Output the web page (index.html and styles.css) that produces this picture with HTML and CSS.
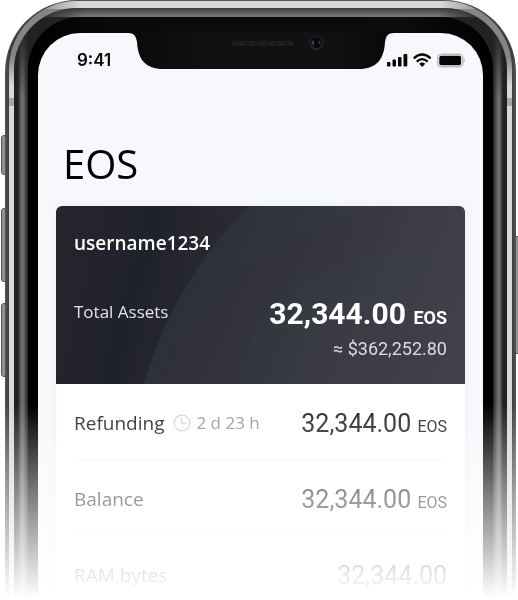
FILE: index.html
```html
<!DOCTYPE html>
<html lang="en">
<head>
<meta charset="utf-8">
<meta name="viewport" content="width=device-width, initial-scale=1">
<title>EOS wallet</title>
<link rel="stylesheet" href="styles.css">
</head>
<body>
<div class="phone">
  <span class="key key-mute"></span>
  <span class="key key-up"></span>
  <span class="key key-down"></span>
  <span class="key key-power"></span>
  <div class="edge">
    <div class="steel">
      <div class="rim">
        <div class="bezel">
          <main class="screen">
            <svg class="notch" width="266" height="38" viewBox="0 0 266 38" aria-hidden="true">
              <defs>
                <linearGradient id="glass"><stop offset="0" stop-color="#0a0a0a"/><stop offset=".3" stop-color="#111"/><stop offset=".8" stop-color="#111"/><stop offset="1" stop-color="#060606"/></linearGradient>
                <pattern id="mesh" width="10" height="5" patternUnits="userSpaceOnUse"><rect width="10" height="5" fill="#1a1a1a"/><path d="M0 0l5 5h3L3 0z" fill="#242424"/></pattern>
              </defs>
              <path d="M0 0H266V1C260 1 258 4 257 10C256 28 248 37 231 37H35C18 37 10 28 9 10C8 4 6 1 0 1Z" fill="url(#glass)"/>
              <rect x="104" y="9" width="61" height="5" rx="2" fill="url(#mesh)"/>
              <circle cx="188.500" cy="11" r="7" fill="#25262a"/>
              <circle cx="188.500" cy="10.500" r="5.500" fill="#08090c"/>
              <path d="M185 8Q183 11 185.500 14Q187 11 185 8Z" fill="#27598e"/>
              <path d="M191 8.500Q193.500 10 192 12.500Q190 11 191 8.500Z" fill="#284a78"/>
            </svg>
            <header class="status">
              <span class="time">9:41</span>
              <svg width="80" height="16" viewBox="0 0 80 16" role="img" aria-label="Signal, wireless, battery">
                <g fill="#050505"><rect x="2" y="10" width="3.500" height="4.500" rx="1"/><rect x="7.500" y="7.500" width="3.500" height="7" rx="1"/><rect x="13" y="5" width="3.500" height="9.500" rx="1"/><rect x="18.500" y="2" width="3.800" height="12.500" rx="1"/></g>
                <g fill="none" stroke="#050505" stroke-width="2.300"><path d="M28.800 6.300Q37.200-1.300 45.600 6.300"/><path d="M31.800 9.600Q37.200 4.700 42.600 9.600"/></g>
                <path d="M34.200 11.800Q37.200 9.400 40.200 11.800L37.200 15Z" fill="#050505"/>
                <rect x="52.700" y="2.200" width="25" height="12.600" rx="3.500" fill="#f7f8fb" stroke="#bdbdbd" stroke-width="1.500"/>
                <rect x="54.300" y="3.800" width="21.800" height="9.400" rx="1.800" fill="#050505"/>
                <path d="M78.500 6.500Q80 7 80 8.500T78.500 10.500Z" fill="#bdbdbd"/>
              </svg>
            </header>
            <h1 class="title">EOS</h1>
            <article class="card">
              <section class="summary">
                <svg class="arcs" viewBox="0 0 410 178" preserveAspectRatio="none" aria-hidden="true">
                  <defs>
                    <linearGradient id="fade" x1="0" x2="1"><stop offset="0" stop-color="#46606a" stop-opacity=".2"/><stop offset=".8" stop-color="#46606a" stop-opacity=".02"/></linearGradient>
                  </defs>
                  <path d="M88 178Q120 70 195 0H410V178Z" fill="url(#fade)"/>
                  <path d="M100 178Q130 90 215 42Q290 5 330 0H410V178Z" fill="#3d2c34" fill-opacity=".16"/>
                  <path d="M180 178Q205 85 270 65Q340 38 410 34V178Z" fill="#39444c" fill-opacity=".2"/>
                  <path d="M215 178Q225 110 290 92Q350 84 410 94V178Z" fill="#4d4550" fill-opacity=".12"/>
                </svg>
                <h2 class="user">username1234</h2>
                <div class="line">
                  <span class="label">Total Assets</span>
                  <strong class="amount total">32,344.00 <small>EOS</small></strong>
                </div>
                <p class="fiat">≈ $362,252.80</p>
              </section>
              <dl class="rows">
                <div class="row">
                  <dt>Refunding</dt>
                  <dd class="wait">
                    <svg width="18" height="18" viewBox="0 0 18 18" fill="none" stroke="#d6d6d6" stroke-width="1.300" aria-hidden="true"><circle cx="9" cy="9" r="7.800"/><path d="M8.500 4V9.500H13.500"/></svg>
                    2 d 23 h
                  </dd>
                  <dd class="amount">32,344.00 <small>EOS</small></dd>
                </div>
                <div class="row">
                  <dt>Balance</dt>
                  <dd class="amount">32,344.00 <small>EOS</small></dd>
                </div>
                <div class="row">
                  <dt>RAM bytes</dt>
                  <dd class="amount">32,344.00</dd>
                </div>
              </dl>
            </article>
          </main>
        </div>
      </div>
    </div>
  </div>
</div>
</body>
</html>
```
FILE: styles.css
```css
* { box-sizing: border-box; }

body {
  margin: 0;
  background: #fff;
  color: #2b2b2b;
  font-family: "Open Sans", sans-serif;
  overflow: hidden;
}

h1, h2, p, dl, dd { margin: 0; }

/* Device body, fading out towards the bottom */
.phone {
  position: relative;
  height: 100vh;
  min-height: 600px;
  padding: 0 2px 0 5px;
  overflow: hidden;
  -webkit-mask-image: linear-gradient(#000 404px, rgba(0, 0, 0, .5) 496px, transparent 598px);
  mask-image: linear-gradient(#000 404px, rgba(0, 0, 0, .5) 496px, transparent 598px);
}

.edge {
  position: relative;
  padding: 1px 4px 0;
  border-radius: 72px 72px 0 0;
  background: linear-gradient(90deg, #555, #3d3d3d 4px, #555 70px, #555 calc(100% - 70px), #3d3d3d calc(100% - 4px), #555);
}

.steel {
  padding: 7px 5px 0;
  border-radius: 68px 68px 0 0;
  background:
    linear-gradient(#a5a7aa, #a5a7aa) 0 97px / 5px 8px no-repeat,
    linear-gradient(#a5a7aa, #a5a7aa) 100% 97px / 5px 8px no-repeat,
    linear-gradient(90deg, transparent 22px, #d8d8d8 72px, #d8d8d8 calc(100% - 72px), transparent calc(100% - 22px)) 0 0 / 100% 8px no-repeat,
    linear-gradient(transparent 56px, #d8d8d8 84px) 0 0 / 5px 100% no-repeat,
    linear-gradient(transparent 56px, #d8d8d8 84px) 100% 0 / 5px 100% no-repeat,
    #858585;
}

.rim {
  padding: 9px 14px 0;
  border-radius: 62px 62px 0 0;
  background:
    linear-gradient(90deg, #222 22px, transparent 70px, transparent calc(100% - 70px), #222 calc(100% - 22px)) 0 0 / 100% 9px no-repeat,
    linear-gradient(#3d3d3d, #777 8px) 0 0 / 100% 9px no-repeat,
    linear-gradient(#222 20px, transparent 90px),
    linear-gradient(90deg, #202020 4px, #3a3a3a 5px, #757575 8px, #606060 10px, #202020 14px, #202020 calc(100% - 14px), #606060 calc(100% - 10px), #757575 calc(100% - 8px), #3a3a3a calc(100% - 5px), #202020 calc(100% - 4px));
}

.bezel {
  padding: 16px 10px 0;
  border-radius: 52px 52px 0 0;
  background: linear-gradient(90deg, #000, #0a0a0a 90px, #0c0c0c calc(100% - 90px), #000);
}

.key {
  position: absolute;
  left: 1px;
  width: 8px;
  border: 1px solid #555;
  border-radius: 3px;
  background: #929292;
}
.key-mute { top: 135px; height: 40px; }
.key-up { top: 208px; height: 74px; }
.key-down { top: 303px; height: 74px; }
.key-power { top: 236px; right: -4px; left: auto; height: 118px; }

.screen {
  position: relative;
  min-height: 567px;
  padding: 0 18px;
  border-radius: 42px 42px 0 0;
  background: #f7f8fb;
}

.notch {
  position: absolute;
  top: -1px;
  left: 50%;
  transform: translateX(-50%);
}

.status {
  display: flex;
  align-items: center;
  justify-content: space-between;
  height: 54px;
  padding-left: 21px;
}

.time {
  color: #050505;
  font: 600 17px/20px Inter, sans-serif;
}

.title {
  padding: 48px 7px 14px;
  color: #000;
  font-size: 40px;
  font-weight: 400;
  line-height: 57px;
}

.card {
  border-radius: 6px;
  background: #fff;
  box-shadow: 0 0 12px rgba(100, 125, 135, .08);
}

.summary {
  position: relative;
  height: 178px;
  padding: 24px 18px 0;
  border-radius: 6px 6px 0 0;
  background: linear-gradient(105deg, #26252e 0%, #20222b 23%, #292832 36%, #30323a 56%, #3b3c46 75%, #474552 100%);
  color: #fff;
  overflow: hidden;
}

.arcs {
  position: absolute;
  inset: 0;
  width: 100%;
  height: 100%;
}

.user, .line, .fiat { position: relative; }

.user {
  font-size: 19px;
  font-weight: 600;
  line-height: 26px;
}

.line {
  display: flex;
  align-items: flex-start;
  justify-content: space-between;
  margin-top: 40px;
  line-height: 36px;
}

.label {
  color: #e2e2e5;
  font-size: 17px;
  line-height: 32px;
}

.amount {
  font-family: Roboto, sans-serif;
  font-size: 25px;
  white-space: nowrap;
}

.amount small { font-size: 16px; }

.total {
  font-size: 30px;
  font-weight: 700;
}
.total small { font-size: 18px; }

.fiat {
  color: #dcdce0;
  font: 400 18px/26px Roboto, sans-serif;
  text-align: right;
}

.rows { padding: 0 18px; }

.row {
  display: flex;
  align-items: center;
  height: 76px;
  padding-top: 2px;
  border-bottom: 1px solid #f5f5f5;
}

.row dt {
  font-size: 19px;
  line-height: 28px;
}

.row .amount {
  margin-left: auto;
  padding-top: 2px;
}

.wait {
  display: flex;
  align-items: center;
  gap: 5px;
  margin-left: 9px;
  color: #999;
  font-size: 17px;
}
```
